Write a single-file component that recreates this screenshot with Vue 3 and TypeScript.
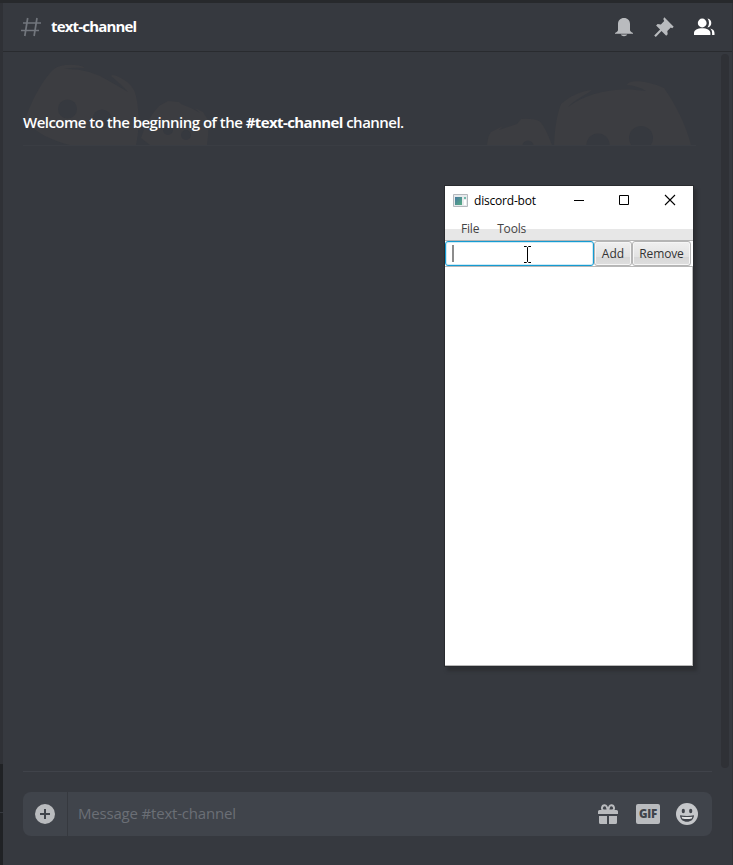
<script setup lang="ts">
import { ref } from 'vue'

const channel = ref('text-channel')
const menus: string[] = ['File', 'Tools']
const actions: string[] = ['Add', 'Remove']
</script>

<template>
  <div class="app">
    <div class="rail"><div class="rail-top"></div><div class="rail-user"></div></div>
    <main class="chat">
      <header class="header">
        <svg class="hash" width="20" height="20" viewBox="0 0 20 20"><path d="M6.700 1 3.800 19M16 1l-2.900 18M2 6h18M0 13.500h18" /></svg>
        <h1>{{ channel }}</h1>
        <div class="tools">
          <svg width="20" height="20" viewBox="0 0 20 20"><path fill="#b9bbbe" d="M10 1C6.400 1 4 3.500 4 7v6c0 1.200-.9 2-3 3v.8h18V16c-2.100-1-3-1.800-3-3V7c0-3.500-2.400-6-6-6ZM6.700 17.500c.8 1.100 1.800 1.700 3.300 1.700s2.500-.6 3.300-1.700Z" /></svg>
          <svg width="20" height="20" viewBox="0 0 20 20"><path fill="#b9bbbe" d="m10.300.3 9.400 9.400-1.500 1.500-1.400-.7-3.500 3.500.4 3.200-1.500 1.500-4.700-4.700L1.800 20 .2 18.400l5.900-5.900-4-3.900 1.500-1.500 3.300.3 3.300-3.500-.9-1.900Z" /></svg>
          <svg width="21" height="20" viewBox="0 0 21 20"><g fill="#fff"><circle cx="8.200" cy="6" r="4.400" /><path d="M0 18v-2c0-3 3.500-4.700 8.200-4.700s8.200 1.700 8.200 4.700v2ZM13.500 1.600c2.300.2 3.800 2 3.800 4.400s-1.500 4.200-3.800 4.400c2-2.300 2-6.500 0-8.800ZM16.200 11.500c2.800.6 4.300 2.200 4.300 4.500v2h-2.400v-2c0-1.800-.6-3.300-1.900-4.500Z" /></g></svg>
        </div>
      </header>

      <div class="messages">
        <section class="welcome">
          <svg class="art" width="690" height="85" viewBox="23 60 690 85">
            <g fill="#3c3d41">
              <path d="M25 121C30 103 43 79 54 69q7-5 21-4 9 1 9 3-11-1-20 1 25-1 45 12 9 5 19 11-5-6-17-16 1-3 10 2 13 7 15 18c4 17 3 37 0 49H70C52 141 35 132 25 121Z" />
              <path d="M141 138q5-18 18-32l9-5 11 1 2 2 10 4 9 5-5-5 8 4 5 8c1 9 0 17-1 25h-57Z" />
              <path d="M487 145c1-6 1-9 4-13l12-6-4 4 18-6 4-5q12-1 18 2 5 3 13 24Z" />
              <path d="M554 145c1-20 3-30 7-41 9-8 20-13 31-14-8 6-18 10-24 17 18-14 47-21 78-16-4-3-14-6-19-6 1-6 20-5 37 3 12 17 22 37 27 57Z" />
            </g>
            <g fill="#36393f">
              <circle cx="67.500" cy="109" r="9.500" /><circle cx="102" cy="119" r="9.500" />
              <circle cx="168" cy="130" r="5" /><circle cx="186" cy="135" r="5" />
              <circle cx="528" cy="146" r="5.500" /><circle cx="598" cy="145" r="11.500" /><circle cx="641" cy="138" r="12" />
            </g>
          </svg>
          <p>Welcome to the beginning of the <b>#{{ channel }}</b><span> channel.</span></p>
        </section>
        <div class="scrollbar"></div>
      </div>

      <footer class="footer">
        <div class="composer">
          <button class="attach" aria-label="Attach">
            <svg width="20" height="20" viewBox="0 0 20 20"><circle cx="10" cy="10" r="10" fill="#b9bbbe" /><path d="M10 5v10M5 10h10" stroke="#40444b" stroke-width="2" /></svg>
          </button>
          <div class="placeholder">Message #{{ channel }}</div>
          <div class="extras">
            <svg width="20" height="20" viewBox="0 0 20 20"><path fill="#b9bbbe" d="M1 12h8v8H2.500Q1 20 1 18.500ZM11 12h8v6.500q0 1.500-1.500 1.500H11ZM1.500 6h17Q20 6 20 7.500V10H0V7.500Q0 6 1.500 6Z" /><g fill="none" stroke="#b9bbbe" stroke-width="1.900"><path d="M9.400 6.500H6.500C2.500 6.500 3.600.9 7 1.200 9 1.300 9.300 4 9.700 6.300" /><path d="M10.600 6.500h2.900c4 0 2.900-5.600-.5-5.300-2 .1-2.300 2.800-2.700 5.100" /></g></svg>
            <span class="gif">GIF</span>
            <svg width="22" height="22" viewBox="0 0 22 22"><circle cx="11" cy="11" r="11" fill="#c5c7ca" /><g fill="#40444b"><ellipse cx="7.300" cy="8" rx="1.600" ry="2.200" /><ellipse cx="14.700" cy="8" rx="1.600" ry="2.200" /><path d="M4 12.300q7 1.300 14 0c-.3 4.400-3.200 6.500-7 6.500s-6.700-2.100-7-6.500Z" /></g><path d="M5.500 13.700q5.500.8 11 0l-.7 1.700q-4.800 1-9.600 0Z" fill="#e1e2e3" /></svg>
          </div>
        </div>
      </footer>
    </main>

    <aside class="window">
      <div class="titlebar">
        <svg class="app-icon" width="15" height="13" viewBox="0 0 15 13"><defs><linearGradient id="tile" x2="1" y2="1"><stop stop-color="#4879a0" /><stop offset="1" stop-color="#57ad83" /></linearGradient></defs><path d="M.5.500h14v12H.5Z" fill="#e7eaec" stroke="#b4b8bd" /><path d="M2 3h7v8H2Z" fill="url(#tile)" /><path d="M11 3h2v2h-2Z" fill="#72b9aa" /><path d="M11 6h2v5h-2Z" fill="#fff" /></svg>
        <span class="title">discord-bot</span>
        <svg class="controls" width="103" height="12" viewBox="0 0 103 12" fill="none" stroke="#000"><path d="M0 6.500h10M45.500 1.500h9v9h-9Z" /><path d="m91 1 10 10M101 1 91 11" stroke-width="1.100" /></svg>
      </div>
      <nav class="menu"><span v-for="menu in menus" :key="menu">{{ menu }}</span></nav>
      <div class="toolbar">
        <div class="field"><i class="caret"></i></div>
        <button v-for="action in actions" :key="action" :class="action.toLowerCase()">{{ action }}</button>
      </div>
      <div class="list"></div>
      <svg class="cursor" width="9" height="17" viewBox="0 0 9 17"><path d="M1 .5h2.500l1 1 1-1H8M4.500 1.500v14M1 16.500h2.500l1-1 1 1H8" fill="none" stroke="#000" /></svg>
    </aside>
  </div>
</template>

<style>
body { margin: 0; background: #36393f; overflow: hidden; }
</style>

<style scoped>
* { box-sizing: border-box; }
.app { position: relative; display: flex; width: 733px; height: 865px; border-top: 3px solid #27292c; background: #36393f; font-family: "Open Sans", sans-serif; overflow: hidden; }
button { margin: 0; padding: 0; font: inherit; }
svg { display: block; flex: none; }
.rail { width: 3px; display: flex; flex-direction: column; background: #202225; }
.rail-top { height: 761px; background: #2f3136; }
.rail-user { height: 49px; border-bottom: 1px solid #36393f; }
.chat { flex: 1; display: flex; flex-direction: column; min-width: 0; border-right: 1px solid #303237; }
.header { height: 49px; display: flex; align-items: center; padding: 0 17px 0 18px; border-bottom: 1px solid #292b2f; }
.hash { fill: none; stroke: #72767d; stroke-width: 1.7; }
h1 { margin: 0 0 2px 10px; color: #fff; font-size: 15px; line-height: 20px; font-weight: 700; letter-spacing: -0.82px; white-space: nowrap; }
.tools { display: flex; gap: 20px; margin-left: auto; }
.messages { height: 719px; display: flex; justify-content: space-between; padding: 2px 3px 0 20px; }
.welcome { position: relative; width: 673px; height: 92px; padding-top: 57px; border-bottom: 1px solid #3a3d43; }
.art { position: absolute; left: 0; top: 6px; }
p { position: relative; margin: 0; color: #fff; font-size: 15px; line-height: 22px; font-weight: 600; letter-spacing: -0.52px; white-space: pre; }
p b { font-weight: 700; letter-spacing: -0.6px; }
.scrollbar { width: 8px; height: 714px; border-radius: 4px; background: #2f3136; }
.footer { width: 689px; height: 94px; margin-left: 20px; padding-top: 20px; border-top: 1px solid #40434a; }
.composer { height: 44px; display: flex; align-items: center; border-radius: 8px; background: #40444b; }
.attach { width: 45px; height: 44px; display: grid; place-items: center; border: 0; border-right: 1px solid #36393f; background: transparent; }
.placeholder { margin: 0 0 2px 10px; color: #6b6f76; font-size: 15px; letter-spacing: -0.19px; white-space: nowrap; }
.extras { display: flex; align-items: center; margin-left: auto; padding-right: 14px; }
.gif { width: 24px; height: 20px; margin: 0 16px 0 18px; border-radius: 2px; background: #b9bbbe; color: #40444b; font-size: 11.5px; line-height: 20px; font-weight: 800; text-align: center; letter-spacing: -0.3px; }
.window { position: absolute; left: 445px; top: 183px; width: 248px; height: 480px; display: flex; flex-direction: column; background: #fff; box-shadow: 0 0 0 1px #292b2f, 3px 4px 3px 1px #2d2f33; color: #000; font-family: "Open Sans", sans-serif; font-size: 12px; }
.titlebar { height: 30px; display: flex; align-items: center; padding: 0 16px 0 8px; }
.app-icon { margin-top: -2px; }
.title { margin: -2px 0 0 6px; letter-spacing: -0.2px; }
.controls { margin-left: auto; margin-top: -2px; }
.menu { height: 25px; display: flex; gap: 18px; padding: 4px 16px 0; border-bottom: 1px solid #b5b5b5; background: linear-gradient(#fff 13px, #e7e7e7 13px); color: #444; line-height: 18px; letter-spacing: -0.2px; }
.toolbar { height: 26px; display: flex; border-bottom: 1px solid #b8b8b8; }
.field { width: 149px; height: 25px; padding: 3px 0 0 6px; border: 1px solid #159bd2; border-radius: 3px; box-shadow: inset 0 0 0 1px #cdeaf5; }
.caret { display: block; width: 2px; height: 17px; background: #8c8c8c; }
.toolbar button { width: 38px; height: 25px; border: 1px solid #b5b5b5; border-radius: 3px; background: linear-gradient(#f0f0f0, #e2e2e2 65%, #d8d8d8 66%, #dedede); box-shadow: inset 0 0 0 1px #f6f6f6; color: #333; line-height: 22px; }
.toolbar .remove { width: 59px; letter-spacing: -0.12px; }
.list { flex: 1; border-right: 1px solid #b8b8b8; border-bottom: 1px solid #b8b8b8; }
.cursor { position: absolute; left: 78px; top: 60px; }
</style>
